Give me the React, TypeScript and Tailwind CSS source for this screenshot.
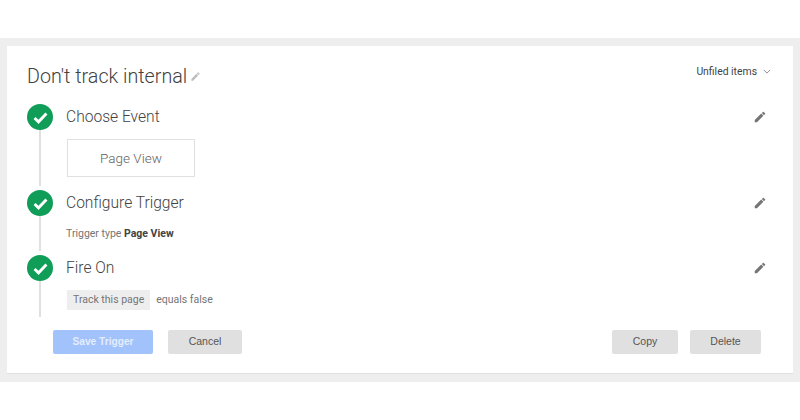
const roboto = "font-['Roboto',sans-serif]";

function Pencil({ className }: { className: string }) {
  return (
    <svg viewBox="0 0 24 24" className={className} fill="currentColor">
      <path d="M3 17.25V21h3.75L17.81 9.94l-3.75-3.75L3 17.25zM20.71 7.04c.39-.39.39-1.02 0-1.41l-2.34-2.34c-.39-.39-1.02-.39-1.41 0l-1.83 1.83 3.75 3.75 1.83-1.83z" />
    </svg>
  );
}

function Step({ title, height, children }: { title: string; height: string; children: React.ReactNode }) {
  return (
    <div className={`flex ${height}`}>
      <div className="flex w-[26px] flex-col items-center">
        <div className="flex h-[26px] w-[26px] shrink-0 items-center justify-center rounded-full bg-[#0f9d58]">
          <svg viewBox="0 0 24 24" className="h-[19px] w-[19px]" fill="none" stroke="white" strokeWidth="3.6">
            <path d="M4.5 12.5l5 5 10-10.5" />
          </svg>
        </div>
        <div className="mb-[4px] w-[2px] flex-1 bg-[#e0e0e0]" />
      </div>
      <div className="ml-[13px] flex-1">
        <div className="flex h-[26px] items-center justify-between">
          <span className="relative top-[1px] text-[15.6px] font-light text-[#424242]">{title}</span>
          <Pencil className="mb-[1px] mr-[6px] h-[14px] w-[14px] text-[#757575]" />
        </div>
        {children}
      </div>
    </div>
  );
}

function Btn({ label, width }: { label: string; width: string }) {
  return (
    <button className={`block h-[24px] rounded-[2px] bg-[#e0e0e0] font-['Liberation_Sans',sans-serif] text-[10.5px] text-[#555555] ${width}`}>
      {label}
    </button>
  );
}

export default function App() {
  return (
    <div className={`h-[420px] w-[800px] overflow-hidden bg-white pt-[38px] ${roboto}`}>
      <div className="bg-[#eeeeee] px-[7px] py-[8px]">
        <div className="h-[328px] border-b border-[#e0e0e0] bg-white px-[20px] pt-[16px]">
          <div className="flex h-[29px] items-center justify-between">
            <div className="flex items-center gap-[3px]">
              <h1 className="text-[19.7px] font-light text-[#424242]">Don't track internal</h1>
              <Pencil className="mt-[-1px] h-[11px] w-[11px] text-[#bdbdbd]" />
            </div>
            <div className="mr-[2px] mt-[-10px] flex items-center gap-[6px] text-[10.4px] text-[#424242]">
              Unfiled items
              <svg viewBox="0 0 10 6" className="h-[5px] w-[8px]" fill="none" stroke="#757575" strokeWidth="1">
                <path d="M1 1l4 4 4-4" />
              </svg>
            </div>
          </div>
          <div className="mt-[13px]">
            <Step title="Choose Event" height="h-[86px]">
              <div className="ml-[1px] mt-[9px] flex h-[38px] w-[128px] items-center justify-center border border-[#e0e0e0] text-[13.5px] font-light text-[#616161]">
                Page View
              </div>
            </Step>
            <Step title="Configure Trigger" height="h-[65px]">
              <p className="mt-[10px] text-[10.5px] text-[#757575]">
                Trigger type <b className="font-bold text-[#424242]">Page View</b>
              </p>
            </Step>
            <Step title="Fire On" height="h-[66px]">
              <div className="mt-[9px] flex items-center gap-[6px] text-[10.5px] text-[#757575]">
                <span className="ml-[1px] flex h-[20px] items-center bg-[#eeeeee] px-[6px]">Track this page</span>
                <span>equals false</span>
              </div>
            </Step>
          </div>
          <div className="ml-[26px] mt-[9px] flex items-center font-['Liberation_Sans',sans-serif]">
            <button className="block h-[24px] w-[100px] rounded-[2px] bg-[#a1c2fa] text-[10.2px] font-bold text-[#e3edfd]">
              Save Trigger
            </button>
            <div className="ml-[15px]">
              <Btn label="Cancel" width="w-[74px]" />
            </div>
            <div className="ml-auto mr-[12px] flex gap-[12px]">
              <Btn label="Copy" width="w-[66px]" />
              <Btn label="Delete" width="w-[71px]" />
            </div>
          </div>
        </div>
      </div>
    </div>
  );
}
